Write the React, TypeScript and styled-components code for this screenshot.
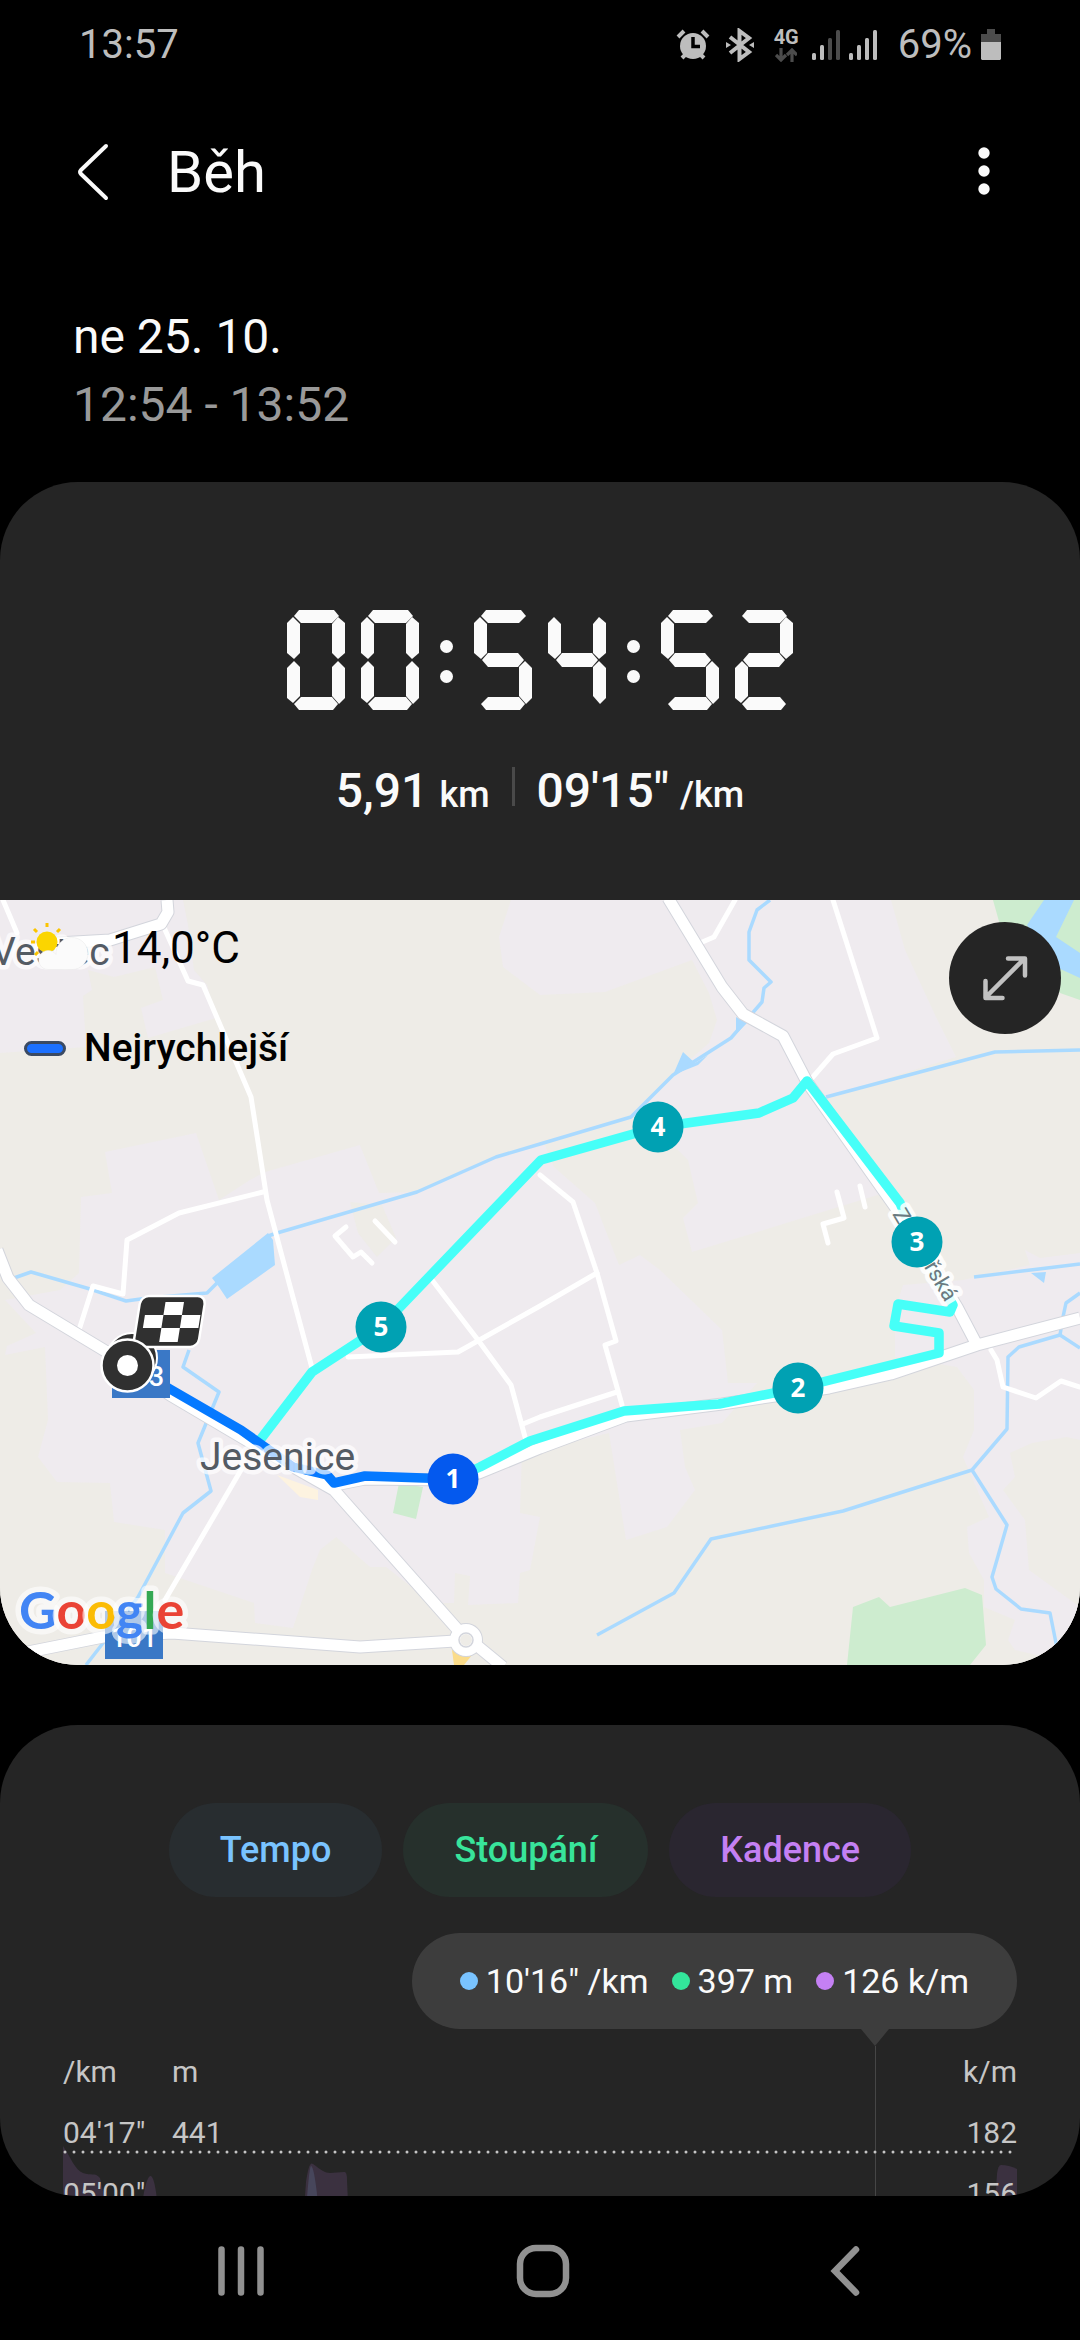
import React from "react";
import styled, { createGlobalStyle } from "styled-components";

const GlobalStyle = createGlobalStyle`
  * { box-sizing: border-box; }
  html, body { margin: 0; background: #000; }
  body { font-family: Roboto, "Noto Sans", sans-serif; color: #fafafa; }
  button { font: inherit; color: inherit; border: 0; padding: 0; background: none; cursor: pointer; }
  h1, p { margin: 0; font-weight: 400; }
  svg { display: block; }
`;

const Screen = styled.div`
  height: 100vh;
  display: flex;
  flex-direction: column;
  background: #000;
`;

/* ---------- status bar ---------- */

const StatusBar = styled.div`
  flex: none;
  height: 90px;
  padding: 0 79px;
  display: flex;
  align-items: center;
  justify-content: space-between;
  font-size: 40px;
  line-height: 48px;
  color: #bdbdbd;
`;

const StatusIcons = styled.div`
  display: flex;
  align-items: center;
`;

const StatusIcon = styled.svg<{ $gap?: number }>`
  margin-left: ${(p) => p.$gap ?? 0}px;
`;

const Network = styled.div`
  display: flex;
  flex-direction: column;
  align-items: center;
  gap: 2px;
  margin: 0 13px 0 19px;
  font-size: 20px;
  line-height: 18px;
  font-weight: 700;
`;

const Percent = styled.span`
  margin: 0 9px 0 21px;
`;

function Signal({ level, gap }: { level: number; gap: number }) {
  return (
    <StatusIcon $gap={gap} width="28" height="30" viewBox="0 0 28 30" aria-label="Signál">
      {[7, 15, 22, 30].map((h, i) => (
        <rect key={h} x={i * 8} y={30 - h} width="4" height={h} rx="1.5" fill={i < level ? "#bdbdbd" : "#4c4c4c"} />
      ))}
    </StatusIcon>
  );
}

function Status() {
  return (
    <StatusBar>
      <span>13:57</span>
      <StatusIcons>
        <StatusIcon width="34" height="32" viewBox="0 0 34 32" aria-label="Budík">
          <path d="M2 8 8 2M32 8 26 2M6 29l4-4M28 29l-4-4" stroke="#bdbdbd" strokeWidth="4" />
          <circle cx="17" cy="17" r="13" fill="#bdbdbd" />
          <path d="M17 8v9.500h7" fill="none" stroke="#000" strokeWidth="3.500" />
        </StatusIcon>
        <StatusIcon $gap={15} width="30" height="34" viewBox="0 0 30 34" aria-label="Bluetooth">
          <path d="M5 9 24 24 14.500 31V3L24 10 5 25" fill="none" stroke="#bdbdbd" strokeWidth="4" />
          <path d="M1 14l5 3-5 3zM29 14l-5 3 5 3z" fill="#bdbdbd" />
        </StatusIcon>
        <Network>
          4G
          <svg width="22" height="14" viewBox="0 0 22 14" aria-hidden="true">
            <path d="M6 0v12M1 7l5 5 5-5M17 14V2M12 7l5-5 5 5" fill="none" stroke="#4c4c4c" strokeWidth="3.200" />
          </svg>
        </Network>
        <Signal level={2} gap={0} />
        <Signal level={4} gap={9} />
        <Percent>69%</Percent>
        <StatusIcon width="20" height="32" viewBox="0 0 20 32" aria-label="Baterie">
          <path d="M6 0h8v5h6v9H0V5h6z" fill="#4c4c4c" />
          <path d="M0 13h20v17l-1 1H1l-1-1z" fill="#bdbdbd" />
        </StatusIcon>
      </StatusIcons>
    </StatusBar>
  );
}

/* ---------- app bar ---------- */

const AppBar = styled.header`
  flex: none;
  height: 164px;
  padding: 0 75px 0 71px;
  display: flex;
  align-items: center;
  gap: 54px;
`;

const Title = styled.h1`
  flex: 1;
  font-size: 58px;
  line-height: 72px;
`;

const IconButton = styled.button`
  display: flex;
  align-items: center;
  justify-content: center;
  width: 42px;
  height: 60px;
`;

/* ---------- scrolled content ---------- */

const Content = styled.main`
  flex: 1;
  min-height: 0;
  overflow: hidden;
  border-radius: 0 0 78px 78px;
`;

const When = styled.div`
  padding: 49px 73px 43px;
  font-size: 48px;
  line-height: 68px;
`;

const Hours = styled.p`
  color: #999;
`;

const Card = styled.section`
  background: #252525;
  border-radius: 78px;
  overflow: hidden;
`;

const Summary = styled.div`
  padding: 128px 0 77px;
`;

/* ---------- seven segment stopwatch ---------- */

const Clock = styled.div`
  display: flex;
  justify-content: center;
  height: 100px;
`;

const Digit = styled.span`
  position: relative;
  width: 58px;
  & + & { margin-left: 16px; }
`;

const Segment = styled.i<{ $shape: string }>`
  position: absolute;
  inset: 0;
  background: #fafafa;
  clip-path: polygon(${(p) => p.$shape});
`;

const Colon = styled.span`
  display: flex;
  flex-direction: column;
  justify-content: center;
  gap: 17px;
  margin: 2px 21px 0;
  &::before, &::after {
    content: "";
    width: 13px;
    height: 13px;
    border-radius: 50%;
    background: #fafafa;
  }
`;

const SEGMENTS: Record<string, string> = {
  a: "7px 6px, 12px 0, 47px 0, 52px 6px, 45px 13px, 14px 13px",
  b: "51px 7px, 58px 13px, 58px 43px, 51px 49px, 45px 43px, 45px 14px",
  c: "51px 51px, 58px 58px, 58px 88px, 52px 94px, 45px 86px, 45px 57px",
  d: "7px 94px, 14px 87px, 45px 87px, 51px 94px, 46px 100px, 12px 100px",
  e: "7px 51px, 13px 57px, 13px 86px, 6px 93px, 0 88px, 0 58px",
  f: "6px 7px, 13px 14px, 13px 43px, 7px 49px, 0 43px, 0 13px",
  g: "8px 50px, 14px 43px, 44px 43px, 50px 50px, 44px 57px, 14px 57px",
};

const LIT: Record<string, string> = {
  "0": "abcdef", "1": "bc", "2": "abged", "3": "abgcd", "4": "fgbc",
  "5": "afgcd", "6": "afgedc", "7": "abc", "8": "abcdefg", "9": "abcdfg",
};

function Stopwatch({ value }: { value: string }) {
  return (
    <Clock role="timer" aria-label={value}>
      {value.split("").map((ch, i) =>
        ch === ":" ? (
          <Colon key={i} />
        ) : (
          <Digit key={i}>
            {LIT[ch].split("").map((s) => (
              <Segment key={s} $shape={SEGMENTS[s]} />
            ))}
          </Digit>
        )
      )}
    </Clock>
  );
}

const Stats = styled.div`
  display: flex;
  justify-content: center;
  align-items: center;
  gap: 22px;
  margin-top: 49px;
  font-size: 48px;
  line-height: 64px;
  font-weight: 500;
`;

const Unit = styled.span`
  margin-left: 11px;
  font-size: 36px;
  line-height: 36px;
`;

const Divider = styled.span`
  width: 3px;
  height: 39px;
  margin-bottom: 10px;
  background: #4a4a4a;
`;

/* ---------- map ---------- */

const MapFrame = styled.div`
  position: relative;
  background: #eeece7;
  color: #000;
`;

const MapOverlay = styled.div`
  position: absolute;
  inset: 0;
  padding: 18px 19px 0 24px;
  display: flex;
  justify-content: space-between;
  align-items: flex-start;
`;

const MapInfo = styled.div`
  display: flex;
  flex-direction: column;
  gap: 46px;
`;

const Weather = styled.div`
  display: flex;
  align-items: center;
  gap: 20px;
  padding-left: 6px;
  font-size: 44px;
  line-height: 60px;
`;

const Legend = styled.div`
  display: flex;
  align-items: center;
  gap: 18px;
  font-size: 39px;
  line-height: 48px;
  font-weight: 500;
`;

const LegendMark = styled.span`
  width: 42px;
  height: 15px;
  border: 3px solid #3b4a63;
  border-radius: 8px;
  background: #1c70ff;
`;

const ExpandButton = styled.button`
  display: flex;
  align-items: center;
  justify-content: center;
  width: 112px;
  height: 112px;
  margin-top: 4px;
  border-radius: 50%;
  background: #252525;
`;

const MapSvg = styled.svg`
  width: 100%;
  height: auto;
  font-family: Roboto, "Noto Sans", sans-serif;
`;

const TOWN = [
  "0,900 183,900 188,925 194,970 207,985 216,1018 148,1038 141,1008 163,1000 155,967 114,977 88,970 92,990 83,996 86,1047 0,1053",
  "511,900 891,900 905,950 936,1017 956,1057 826,1097 915,1240 884,1193 692,1252 683,1218 698,1203 688,1160 678,1150 636,1135 643,1107 676,1072 709,1043 717,1020 709,993 692,960 605,992 540,995 503,967 499,937",
  "105,1152 196,1133 219,1200 250,1180 265,1172 360,1145 379,1193 417,1192 496,1157 545,1145 554,1167 595,1203 619,1265 640,1255 660,1270 722,1330 728,1383 757,1383 722,1423 680,1430 685,1467 695,1490 667,1527 626,1540 609,1433 540,1450 522,1452 520,1513 540,1517 530,1570 520,1573 518,1603 468,1605 470,1576 455,1573 454,1603 432,1603 386,1567 370,1567 336,1537 320,1550 312,1570 293,1628 255,1623 254,1603 165,1573 165,1530 114,1522 110,1483 57,1482 38,1457 48,1420 45,1347 5,1355 7,1346 36,1333 5,1300 60,1290 79,1273 81,1197 112,1193",
  "903,1285 963,1280 1030,1265 1025,1250 1040,1258 1080,1253 1080,1440 1067,1437 1032,1443 1010,1453 1015,1477 1003,1490 1025,1520 1029,1570 1080,1607 1080,1665 1015,1650 1008,1640 1015,1620 984,1607 984,1580 969,1553 967,1527 989,1517 963,1457 974,1430 974,1390 957,1367 895,1357 895,1310",
];

const GREEN = [
  "853,1607 879,1597 890,1607 965,1588 982,1595 986,1645 970,1665 847,1665",
  "399,1483 423,1487 416,1519 393,1513",
  "993,900 1080,900 1080,1000 1060,993 1000,925",
];

const WATER = [
  "1044,900 1074,900 1056,937 1080,953 1080,978 1056,967 1027,925",
  "268,1233 273,1240 275,1265 227,1299 219,1287 212,1278",
  "683,1052 695,1063 708,1055 698,1065 673,1075",
  "736,1017 747,1023 736,1034",
  "1031,1273 1046,1272 1044,1283",
];

const STREAMS = [
  "14,1278 31,1272 90,1289 126,1301 148,1298 207,1293 217,1283",
  "268,1236 277,1233 417,1192 496,1157 540,1144 631,1117 673,1075 731,1038 762,1002 764,988 771,982 749,960 749,932 757,910 770,900",
  "826,1097 995,1052 1080,1050",
  "974,1277 1080,1264",
  "189,1350 183,1367 219,1392 198,1443 211,1491 183,1513 138,1597 100,1647 86,1665",
  "597,1635 674,1593 711,1539 843,1511 972,1470 1007,1429 1008,1357 1019,1347 1060,1335 1080,1348",
  "1060,1335 1063,1317 1066,1303 1080,1293",
  "972,1470 1007,1525 992,1577 996,1589 1021,1609 1050,1613 1056,1643 1060,1665",
];

const STREETS = [
  "162,923 188,981 203,985 251,1097 267,1200 291,1290 312,1368",
  "263,1192 179,1213 127,1240 123,1294 93,1286 79,1330",
  "3,900 17,933",
  "346,1227 335,1236 353,1257 361,1252 372,1263",
  "375,1221 395,1242",
  "540,1175 573,1202 597,1273 616,1341 605,1345 622,1405",
  "597,1273 540,1306 458,1352 348,1357",
  "432,1280 478,1340 511,1385 525,1437",
  "523,1424 540,1417 617,1392",
  "241,1470 165,1600",
  "735,900 714,937 700,943",
  "833,900 877,1038 833,1054 812,1078",
  "837,1192 844,1218 823,1224 828,1243",
  "860,1186 865,1207",
  "991,1350 997,1360 1003,1387 1036,1398 1061,1381 1080,1387",
];

const ROADS = [
  "167,900 168,912 161,924 110,940 40,944",
  "-3,1250 8,1278 29,1305 107,1352 170,1395 258,1447 334,1490 458,1630 503,1667",
  "330,1486 365,1479 450,1480 479,1473 540,1448 626,1416 722,1404 829,1388 891,1374 977,1345 1080,1318",
  "668,898 722,987 743,1014 783,1036 807,1082 903,1218 957,1307 977,1345",
  "0,1658 33,1651 103,1637 172,1633 360,1647 455,1641",
];

const ROUTE =
  "453,1479 480,1467 530,1441 624,1411 719,1404 798,1388 939,1353 939,1333 894,1326 898,1304 950,1312 953,1305 917,1242 900,1203 807,1081 793,1098 759,1113 658,1127 541,1160 381,1327 312,1372 260,1440";
const FASTEST = "132,1366 170,1389 241,1430 293,1467 327,1475 334,1483 365,1476 453,1479";

const PINS = [
  { km: 1, x: 453, y: 1479, fill: "#0459ee" },
  { km: 2, x: 798, y: 1388, fill: "#00a1b3" },
  { km: 3, x: 917, y: 1242, fill: "#00a1b3" },
  { km: 4, x: 658, y: 1127, fill: "#00a1b3" },
  { km: 5, x: 381, y: 1327, fill: "#00a1b3" },
];

const LOGO = [
  ["G", "#4285f4"], ["o", "#ea4335"], ["o", "#fbbc05"],
  ["g", "#4285f4"], ["l", "#34a853"], ["e", "#ea4335"],
];

const halo = {
  stroke: "#fff",
  strokeOpacity: 0.7,
  strokeWidth: 9,
  strokeLinejoin: "round" as const,
  paintOrder: "stroke",
};

function RouteMap() {
  return (
    <MapSvg viewBox="0 900 1080 765" aria-label="Mapa trasy">
      <rect y="900" width="1080" height="765" fill="#eeece7" />
      {TOWN.map((p) => <polygon key={p} points={p} fill="#efebef" />)}
      <polygon points="350,1202 382,1205 396,1238 377,1257 358,1233" fill="#eeece7" />
      {GREEN.map((p) => <polygon key={p} points={p} fill="#cdeccf" />)}
      <polygon points="277,1475 318,1490 318,1500 300,1497" fill="#fdf3e0" />
      <polygon points="452,1650 472,1655 464,1665 454,1665" fill="#fbdc8a" />
      {WATER.map((p) => <polygon key={p} points={p} fill="#aadaff" />)}
      <g fill="none" strokeLinejoin="round">
        {STREAMS.map((p) => <polyline key={p} points={p} stroke="#aadaff" strokeWidth="3.500" />)}
        {STREETS.map((p) => <polyline key={p} points={p} stroke="#fff" strokeWidth="5" strokeLinecap="round" />)}
        {ROADS.map((p) => <polyline key={p} points={p} stroke="#d3d5dc" strokeWidth="13" />)}
        <circle cx="466" cy="1640" r="17" fill="#d3d5dc" />
        {ROADS.map((p) => <polyline key={p} points={p} stroke="#fff" strokeWidth="11" />)}
        <circle cx="466" cy="1640" r="11" fill="#eeece7" stroke="#fff" strokeWidth="10" />
        <circle cx="466" cy="1640" r="7" stroke="#d3d5dc" strokeWidth="1.500" />
        <polyline points={ROUTE} stroke="#46fff8" strokeWidth="9.500" />
        <polyline points={FASTEST} stroke="#0579ff" strokeWidth="9.500" />
      </g>

      <g fill="#545b64" fontSize="39">
        <text x="-9" y="965" {...halo}>Vestec</text>
        <text x="200" y="1470" {...halo}>Jesenice</text>
      </g>
      <text transform="translate(892 1214) rotate(59)" fontSize="22" fill="#6a7a80" {...halo} strokeOpacity={0.85}>
        Zdiměřská
      </text>

      <g fontSize="27" fontWeight="500" fill="#fff" textAnchor="middle">
        <rect x="112" y="1350" width="58" height="48" fill="#3a78c6" />
        <text x="141" y="1386">603</text>
        <rect x="105" y="1611" width="58" height="48" fill="#3a78c6" />
        <text x="134" y="1647">101</text>
      </g>

      {PINS.map((p) => (
        <g key={p.km}>
          <circle cx={p.x} cy={p.y} r="25.500" fill={p.fill} />
          <text x={p.x} y={p.y + 9} fontSize="26" fontWeight="700" fontFamily='"Open Sans", "Noto Sans", sans-serif' textAnchor="middle" fill="#fff">
            {p.km}
          </text>
        </g>
      ))}

      <circle cx="132" cy="1358" r="25" fill="#303030" stroke="#fff" strokeWidth="2" />
      <g transform="translate(147 1302) skewX(-9)">
        <rect x="-7" y="-6" width="65" height="51" rx="8" fill="#303030" stroke="#fff" strokeWidth="2.500" />
        <path d="M18.500 0H37v13H18.500zM0 13h18.500v13H0zM37 13h18.500v13H37zM18.500 26H37v14H18.500z" fill="#fff" />
      </g>
      <circle cx="127.500" cy="1365.500" r="26" fill="#303030" stroke="#fff" strokeWidth="2.500" />
      <circle cx="127.500" cy="1365.500" r="10.500" fill="#fff" />

      <text x="19" y="1629" fontSize="52" fontFamily="Lato, sans-serif" fontWeight="700" stroke="#fff" strokeOpacity="0.6" strokeWidth="11" strokeLinejoin="round" paintOrder="stroke">
        {LOGO.map(([letter, color], i) => (
          <tspan key={i} fill={color}>{letter}</tspan>
        ))}
      </text>
    </MapSvg>
  );
}

/* ---------- chart card ---------- */

const ChartCard = styled(Card)`
  margin-top: 60px;
  padding: 78px 63px;
  min-height: 600px;
`;

const Chips = styled.div`
  display: flex;
  justify-content: center;
  gap: 21px;
`;

const Chip = styled.button<{ $color: string; $bg: string }>`
  height: 94px;
  padding: 0 51px;
  border-radius: 47px;
  font-size: 36px;
  line-height: 48px;
  font-weight: 500;
  color: ${(p) => p.$color};
  background: ${(p) => p.$bg};
`;

const Bubble = styled.div`
  position: relative;
  display: flex;
  align-items: center;
  gap: 23px;
  width: fit-content;
  height: 96px;
  margin: 36px 0 12px auto;
  padding: 0 48px;
  border-radius: 48px;
  background: #3d3d3d;
  font-size: 34px;
  line-height: 48px;
  &::after {
    content: "";
    position: absolute;
    top: 100%;
    right: 128px;
    border: solid transparent;
    border-width: 17px 14px 0;
    border-top-color: #3d3d3d;
  }
`;

const Reading = styled.span<{ $color: string }>`
  display: flex;
  align-items: center;
  gap: 8px;
  &::before {
    content: "";
    width: 18px;
    height: 18px;
    border-radius: 50%;
    background: ${(p) => p.$color};
  }
`;

const Plot = styled.div`
  position: relative;
`;

const PlotSvg = styled.svg`
  position: absolute;
  inset: 0;
  width: 100%;
  height: 100%;
`;

const AxisRow = styled.div`
  position: relative;
  display: grid;
  grid-template-columns: 109px 1fr auto;
  font-size: 30px;
  line-height: 61px;
  color: #c6c6c6;
`;

function Chart() {
  return (
    <Plot>
      <PlotSvg viewBox="0 -1 954 183" preserveAspectRatio="none" aria-hidden="true">
        <g fill="#3b3140">
          <path d="M0 104C8 116 12 128 20 131C28 134 32 130 37 136L41 154V183H0z" />
          <path d="M76 183 81 150Q88 118 93 150L97 183z" />
          <path d="M240 183 243 140Q246 118 250 122C258 128 262 131 267 131L281 130Q284 129 284 138L286 183z" />
          <path d="M931 183 934 132Q935 123 938 123Q946 123 954 127V183z" />
        </g>
        <path d="M242 183Q246 124 248 124Q252 124 257 183z" fill="#47465b" />
        <line x1="812.500" y1="4" x2="812.500" y2="183" stroke="#464646" />
        <line x1="2" y1="110" x2="954" y2="110" stroke="#c6c6c6" strokeWidth="3" strokeLinecap="round" strokeDasharray="0 9" />
      </PlotSvg>
      <AxisRow><span>/km</span><span>m</span><span>k/m</span></AxisRow>
      <AxisRow><span>04'17"</span><span>441</span><span>182</span></AxisRow>
      <AxisRow><span>05'00"</span><span /><span>156</span></AxisRow>
    </Plot>
  );
}

/* ---------- navigation bar ---------- */

const NavBar = styled.nav`
  flex: none;
  height: 144px;
  padding: 6px 84px 0 90px;
  display: flex;
`;

const NavButton = styled.button`
  flex: 1;
  display: flex;
  align-items: center;
  justify-content: center;
`;

export default function App() {
  return (
    <Screen>
      <GlobalStyle />
      <Status />
      <AppBar>
        <IconButton aria-label="Zpět">
          <svg width="34" height="58" viewBox="0 0 34 58">
            <path d="M31 3 6 27q-2 2 0 4L31 55" fill="none" stroke="#fafafa" strokeWidth="4" strokeLinecap="round" />
          </svg>
        </IconButton>
        <Title>Běh</Title>
        <IconButton aria-label="Další možnosti">
          <svg width="12" height="50" viewBox="0 0 12 50" fill="#fafafa">
            <circle cx="6" cy="6" r="5.700" />
            <circle cx="6" cy="24" r="5.700" />
            <circle cx="6" cy="42" r="5.700" />
          </svg>
        </IconButton>
      </AppBar>

      <Content>
        <When>
          <p>ne 25. 10.</p>
          <Hours>12:54 - 13:52</Hours>
        </When>

        <Card>
          <Summary>
            <Stopwatch value="00:54:52" />
            <Stats>
              <span>5,91<Unit>km</Unit></span>
              <Divider />
              <span>09'15"<Unit>/km</Unit></span>
            </Stats>
          </Summary>
          <MapFrame>
            <RouteMap />
            <MapOverlay>
              <MapInfo>
                <Weather>
                  <svg width="62" height="52" viewBox="0 0 62 52" aria-label="Polojasno">
                    <path d="M17 1v4M4 7l3 3M30 7l-3 3M1 20h4M5 33l3-3" stroke="#fbc400" strokeWidth="3" />
                    <circle cx="17" cy="20" r="10.500" fill="#fbd500" />
                    <path d="M18 47.500a9.500 9.500 0 1 1 8-15a16 16 0 1 1 16 15z" fill="#fbfbfb" stroke="#e9e9e9" strokeWidth="0.500" />
                  </svg>
                  14,0°C
                </Weather>
                <Legend>
                  <LegendMark />
                  Nejrychlejší
                </Legend>
              </MapInfo>
              <ExpandButton aria-label="Zvětšit mapu">
                <svg width="46" height="46" viewBox="0 0 46 46" fill="none" stroke="#c2c2c2" strokeWidth="4.500" strokeLinecap="round" strokeLinejoin="round">
                  <path d="M4 42 42 4M26 3.500h17v17M3.500 26v17h17" />
                </svg>
              </ExpandButton>
            </MapOverlay>
          </MapFrame>
        </Card>

        <ChartCard>
          <Chips>
            <Chip $color="#79c3ff" $bg="#282d30">Tempo</Chip>
            <Chip $color="#38e49b" $bg="#26302c">Stoupání</Chip>
            <Chip $color="#c480f3" $bg="#2a2630">Kadence</Chip>
          </Chips>
          <Bubble>
            <Reading $color="#79c3ff">10'16" /km</Reading>
            <Reading $color="#33e59b">397 m</Reading>
            <Reading $color="#c480f3">126 k/m</Reading>
          </Bubble>
          <Chart />
        </ChartCard>
      </Content>

      <NavBar>
        <NavButton aria-label="Poslední aplikace">
          <svg width="48" height="52" viewBox="0 0 48 52" stroke="#919191" strokeWidth="6.500" strokeLinecap="round">
            <path d="M4.500 4.500v43M24 4.500v43M43.500 4.500v43" />
          </svg>
        </NavButton>
        <NavButton aria-label="Domů">
          <svg width="54" height="54" viewBox="0 0 54 54">
            <rect x="4" y="4" width="46" height="46" rx="16" fill="none" stroke="#919191" strokeWidth="6.500" />
          </svg>
        </NavButton>
        <NavButton aria-label="Zpět">
          <svg width="30" height="52" viewBox="0 0 30 52">
            <path d="M26 4.500 5 26l21 21.500" fill="none" stroke="#919191" strokeWidth="6.500" strokeLinecap="round" />
          </svg>
        </NavButton>
      </NavBar>
    </Screen>
  );
}
